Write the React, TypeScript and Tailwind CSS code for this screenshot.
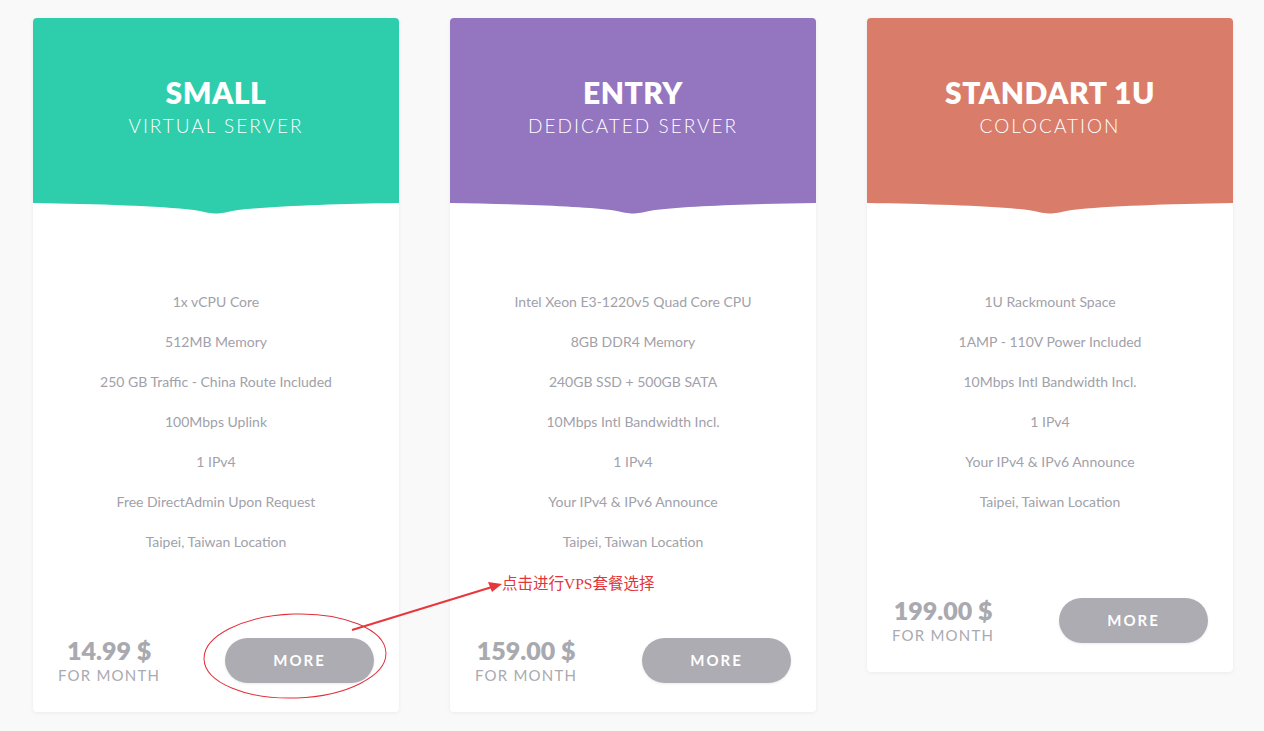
import React from 'react';

type Plan = {
  name: string;
  kind: string;
  color: string;
  features: string[];
  price: string;
};

const plans: Plan[] = [
  {
    name: 'SMALL',
    kind: 'VIRTUAL SERVER',
    color: '#2ecdab',
    features: [
      '1x vCPU Core',
      '512MB Memory',
      '250 GB Traffic - China Route Included',
      '100Mbps Uplink',
      '1 IPv4',
      'Free DirectAdmin Upon Request',
      'Taipei, Taiwan Location',
    ],
    price: '14.99 $',
  },
  {
    name: 'ENTRY',
    kind: 'DEDICATED SERVER',
    color: '#9475c0',
    features: [
      'Intel Xeon E3-1220v5 Quad Core CPU',
      '8GB DDR4 Memory',
      '240GB SSD + 500GB SATA',
      '10Mbps Intl Bandwidth Incl.',
      '1 IPv4',
      'Your IPv4 & IPv6 Announce',
      'Taipei, Taiwan Location',
    ],
    price: '159.00 $',
  },
  {
    name: 'STANDART 1U',
    kind: 'COLOCATION',
    color: '#d97d6a',
    features: [
      '1U Rackmount Space',
      '1AMP - 110V Power Included',
      '10Mbps Intl Bandwidth Incl.',
      '1 IPv4',
      'Your IPv4 & IPv6 Announce',
      'Taipei, Taiwan Location',
    ],
    price: '199.00 $',
  },
];

const PlanCard: React.FC<{ plan: Plan }> = ({ plan }) => (
  <div className="w-[366px] bg-white rounded-[4px] shadow-[0_1px_4px_rgba(0,0,0,0.06)] overflow-hidden">
    {/* header */}
    <div className="h-[185px] flex flex-col items-center pt-[56px] text-white" style={{ backgroundColor: plan.color }}>
      <div className="text-[30px] leading-[36px] font-extrabold tracking-[0.5px]">{plan.name}</div>
      <div className="text-[19px] leading-[24px] tracking-[2px] mt-[4px] font-light">{plan.kind}</div>
    </div>
    {/* wave under the header */}
    <svg width="366" height="11" viewBox="0 0 366 11" className="block">
      <path
        d="M0 0 H366 C300 1 240 3 205 7 C192 9.5 188 10.5 183 10.5 C178 10.5 174 9.5 161 7 C126 3 66 1 0 0 Z"
        fill={plan.color}
      />
    </svg>

    <ul className="flex flex-col items-center gap-[20px] pt-[78px] text-[14px] leading-[20px] text-[#a1a1a9]">
      {plan.features.map((f) => (
        <li key={f}>{f}</li>
      ))}
    </ul>

    <div className="flex items-center justify-between px-[25px] pt-[86px] pb-[29px]">
      <div className="flex flex-col items-center h-[45px]">
        <span className="text-[25px] leading-[24px] font-extrabold text-[#a9a9b0]">{plan.price}</span>
        <span className="text-[15px] leading-[20px] tracking-[1.2px] text-[#aaaab1] mt-[3px]">FOR MONTH</span>
      </div>
      <button className="w-[149px] h-[45px] rounded-full bg-[#acacb2] text-white text-[15px] font-bold tracking-[2px] shadow-[0_1px_3px_rgba(0,0,0,0.08)]">
        MORE
      </button>
    </div>
  </div>
);

export default function App() {
  return (
    <div
      className="relative w-[1264px] h-[731px] bg-[#f9f9f9] overflow-hidden"
      style={{ fontFamily: 'Lato, "Noto Sans", sans-serif' }}
    >
      <div className="flex items-start gap-[51px] pl-[33px] pt-[18px]">
        {plans.map((p) => (
          <PlanCard key={p.name} plan={p} />
        ))}
      </div>

      {/* annotation overlay */}
      <svg className="absolute left-0 top-0 pointer-events-none" width="1264" height="731">
        <ellipse cx="295" cy="656" rx="91" ry="42" fill="none" stroke="#e0313a" strokeWidth="1" transform="rotate(-2 295 656)" />
        <line x1="352" y1="630" x2="492" y2="587" stroke="#e8373c" strokeWidth="2" />
        <polygon points="502,584 488,582 492,592" fill="#e8373c" />
      </svg>
      <div
        className="absolute left-[502px] top-[573px] text-[15.5px] leading-[22px] text-[#e3343a]"
        style={{ fontFamily: '"Liberation Serif", "Noto Sans CJK SC", serif' }}
      >
        点击进行VPS套餐选择
      </div>
    </div>
  );
}
